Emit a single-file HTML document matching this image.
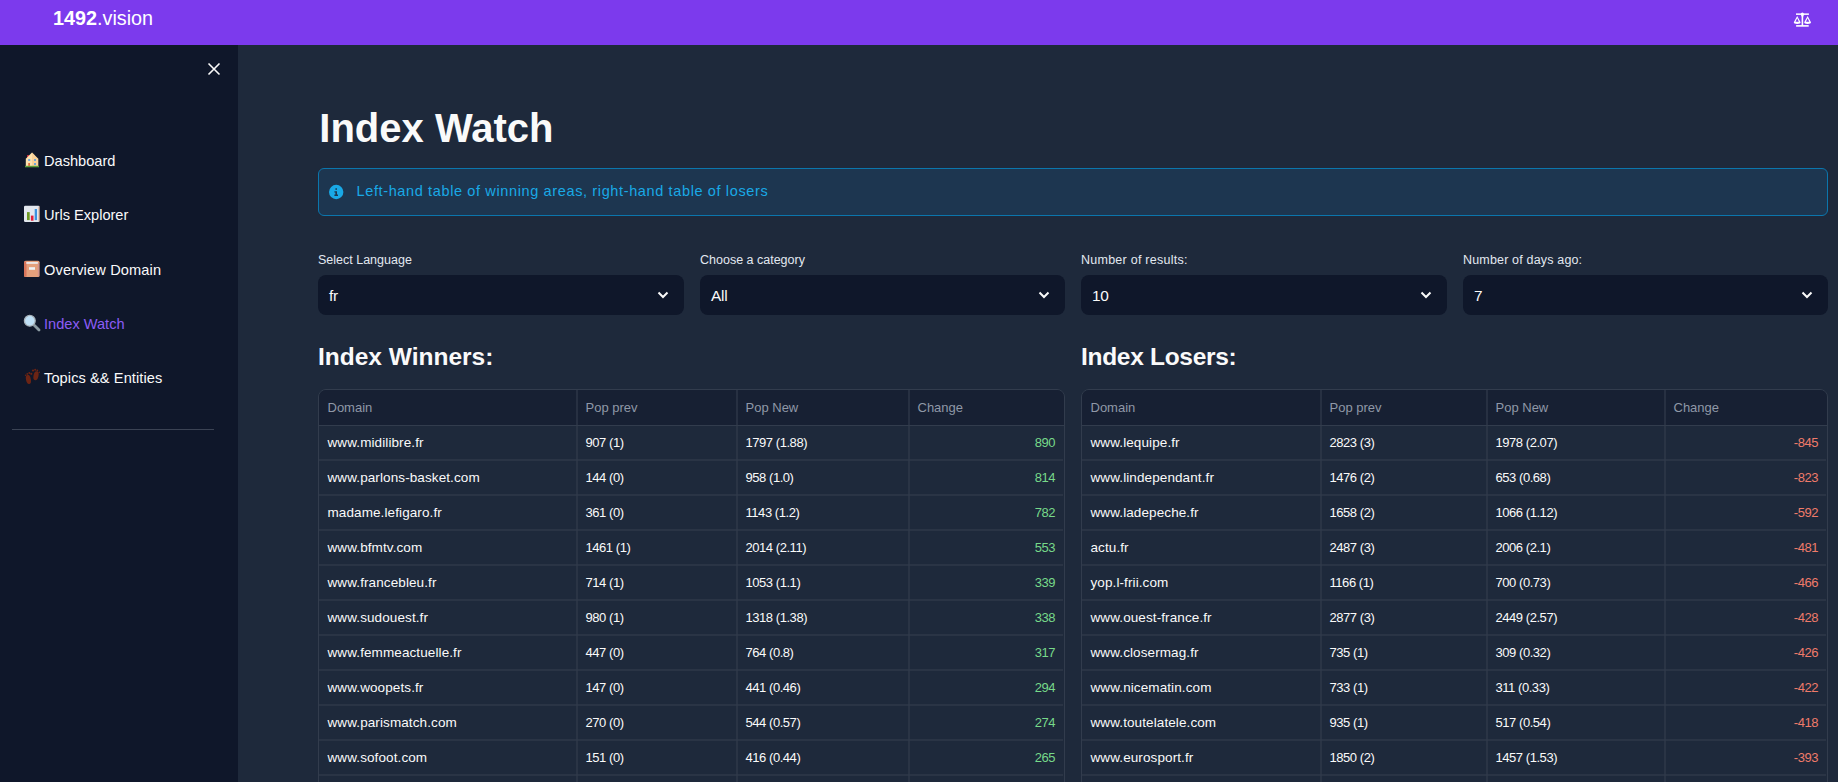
<!DOCTYPE html><html><head><meta charset="utf-8"><style>
*{margin:0;padding:0;box-sizing:border-box}
html,body{width:1838px;height:782px;overflow:hidden;background:#1e293b;font-family:"Liberation Sans",sans-serif}
.t{position:absolute;white-space:nowrap}
.a{position:absolute}
</style></head><body>
<div class="a" style="left:0;top:0;width:1838px;height:45px;background:#7c3aed"></div>
<div class="t" style="left:53px;top:8.84px;font-size:19.8px;line-height:19.8px;color:#ffffff;font-weight:400;"><b>1492</b>.vision</div>
<div class="a" style="left:0;top:45px;width:238px;height:737px;background:#0f172a"></div>
<svg class="a" style="left:206px;top:61px" width="16" height="16" viewBox="0 0 16 16"><path d="M2.5 2.5L13.5 13.5M13.5 2.5L2.5 13.5" stroke="#fafafa" stroke-width="1.6"/></svg>
<div class="t" style="left:44px;top:153.54px;font-size:14.6px;line-height:14.6px;color:#fafafa;font-weight:400;letter-spacing:0px">Dashboard</div>
<div class="t" style="left:44px;top:207.84px;font-size:14.6px;line-height:14.6px;color:#fafafa;font-weight:400;letter-spacing:0px">Urls Explorer</div>
<div class="t" style="left:44px;top:262.94px;font-size:14.6px;line-height:14.6px;color:#fafafa;font-weight:400;letter-spacing:0.14px">Overview Domain</div>
<div class="t" style="left:44px;top:316.54px;font-size:14.6px;line-height:14.6px;color:#8b5cf6;font-weight:400;letter-spacing:0px">Index Watch</div>
<div class="t" style="left:44px;top:370.84px;font-size:14.6px;line-height:14.6px;color:#fafafa;font-weight:400;letter-spacing:0.09px">Topics &amp;&amp; Entities</div>
<svg class="a" style="left:20px;top:148px" width="24" height="24" viewBox="0 0 24 24"><rect x="7" y="7" width="2" height="3" fill="#c0283a"/><path d="M5.8 10.8L12 4.6L18.2 10.8V17.9H5.8Z" fill="#fde2ae"/><path d="M12 4.6L18.2 10.8V17.9H12Z" fill="#f6c88a" opacity=".6"/><rect x="8.2" y="11.2" width="2" height="1.6" fill="#4f9be6"/><rect x="14" y="11.2" width="2" height="1.6" fill="#4f9be6"/><rect x="14" y="15.2" width="2" height="1.6" fill="#4f9be6"/><rect x="8.3" y="15" width="1.6" height="2.9" fill="#e0602e"/><rect x="5" y="17.8" width="14" height="1.5" fill="#5c9e3a"/></svg>
<svg class="a" style="left:20px;top:202px" width="24" height="24" viewBox="0 0 24 24"><rect x="4" y="3.8" width="15.6" height="16.1" rx="1.2" fill="#e3e8ef"/><rect x="18.6" y="4.5" width="1" height="15" fill="#c0703a" opacity=".6"/><rect x="7" y="10.1" width="2.7" height="8" fill="#6e9a22"/><rect x="10.9" y="13.6" width="2.6" height="5.1" fill="#e3213a"/><rect x="14.7" y="7" width="2.3" height="11.1" fill="#3c92e0"/></svg>
<svg class="a" style="left:20px;top:257px" width="24" height="24" viewBox="0 0 24 24"><rect x="4.1" y="3.8" width="15.5" height="16.1" rx="1.5" fill="#e4a07c"/><rect x="4.1" y="4.5" width="2.4" height="15.2" fill="#d9745a"/><rect x="6.3" y="5.1" width="11.6" height="1.7" fill="#eceef2"/><rect x="17.9" y="6" width="1" height="13" fill="#c98a9a" opacity=".7"/><rect x="9" y="10.2" width="6" height="2.6" fill="#eef4f8"/></svg>
<svg class="a" style="left:20px;top:311px" width="24" height="24" viewBox="0 0 24 24"><path d="M14.5 14.5L19 19" stroke="#8c9ca4" stroke-width="2.8" stroke-linecap="round"/><circle cx="9.8" cy="9.8" r="5.4" fill="#bfe0f6" stroke="#a9b3ba" stroke-width="1.3"/></svg>
<svg class="a" style="left:20px;top:365px" width="24" height="24" viewBox="0 0 24 24"><ellipse cx="8.4" cy="14.4" rx="2.4" ry="4.6" transform="rotate(-12 8.4 14.4)" fill="#6c2414"/><ellipse cx="16" cy="10.8" rx="2.5" ry="4.6" transform="rotate(12 16 10.8)" fill="#6c2414"/><circle cx="5.6" cy="10.3" r=".8" fill="#6c2414"/><circle cx="7.3" cy="8.9" r=".9" fill="#6c2414"/><circle cx="9.3" cy="8" r="1" fill="#6c2414"/><circle cx="11.3" cy="8.8" r="1.1" fill="#6c2414"/><circle cx="13" cy="5.5" r="1.1" fill="#6c2414"/><circle cx="15.2" cy="4.8" r="1" fill="#6c2414"/><circle cx="17.3" cy="5.5" r=".9" fill="#6c2414"/><circle cx="19.3" cy="7.3" r=".8" fill="#6c2414"/></svg>
<svg class="a" style="left:1790px;top:8px" width="24" height="24" viewBox="0 0 24 24"><g fill="#fff"><rect x="6" y="5.4" width="12.9" height="1.5"/><circle cx="12.4" cy="6.1" r="1.5"/><path d="M10.9 6.5H13.9L13.2 9V18H11.6V9Z"/><rect x="6.1" y="17.1" width="12.6" height="1.6"/><path fill-rule="evenodd" d="M7.2 8.1L3.8 14.3Q3.8 16 7.2 16Q10.6 16 10.6 14.3ZM7.2 10.3L5.5 13.7H8.9Z"/><path fill-rule="evenodd" d="M17.6 8.1L14.2 14.3Q14.2 16 17.6 16Q21 16 21 14.3ZM17.6 10.3L15.9 13.7H19.3Z"/></g></svg>
<div class="a" style="left:12px;top:429px;width:202px;height:1px;background:#3b4354"></div>
<div class="t" style="left:319.3px;top:107.74px;font-size:40px;line-height:40px;color:#fafafa;font-weight:700;">Index Watch</div>
<div class="a" style="left:318px;top:168px;width:1510px;height:48px;border:1px solid #0b76ad;border-radius:6px;background:#1d3650"></div>
<svg class="a" style="left:328px;top:183.8px" width="16" height="16" viewBox="0 0 16 16"><circle cx="8.2" cy="8" r="7.2" fill="#19a9e6"/><rect x="7.4" y="4.3" width="1.6" height="1.5" fill="#1d3650"/><path d="M6.4 7.2H9V10.6H10V11.9H6.4V10.6H7.4V8.5H6.4Z" fill="#1d3650"/></svg>
<div class="t" style="left:356.5px;top:183.93px;font-size:14.5px;line-height:14.5px;color:#19a9e6;font-weight:400;letter-spacing:0.63px">Left-hand table of winning areas, right-hand table of losers</div>
<div class="t" style="left:318px;top:253.62px;font-size:12.5px;line-height:12.5px;color:#e2e8f0;font-weight:400;letter-spacing:0px">Select Language</div>
<div class="a" style="left:318px;top:275px;width:366px;height:40px;border-radius:8px;background:#0f172a"></div>
<div class="t" style="left:329px;top:288.16px;font-size:15.4px;line-height:15.4px;color:#fafafa;font-weight:400;letter-spacing:-0.2px">fr</div>
<svg class="a" style="left:657px;top:289px" width="12" height="12" viewBox="0 0 12 12"><path d="M1.5 3.5L6 8L10.5 3.5" stroke="#fafafa" stroke-width="2" fill="none"/></svg>
<div class="t" style="left:700px;top:253.62px;font-size:12.5px;line-height:12.5px;color:#e2e8f0;font-weight:400;letter-spacing:0px">Choose a category</div>
<div class="a" style="left:700px;top:275px;width:365px;height:40px;border-radius:8px;background:#0f172a"></div>
<div class="t" style="left:711px;top:288.16px;font-size:15.4px;line-height:15.4px;color:#fafafa;font-weight:400;letter-spacing:-0.2px">All</div>
<svg class="a" style="left:1038px;top:289px" width="12" height="12" viewBox="0 0 12 12"><path d="M1.5 3.5L6 8L10.5 3.5" stroke="#fafafa" stroke-width="2" fill="none"/></svg>
<div class="t" style="left:1081px;top:253.62px;font-size:12.5px;line-height:12.5px;color:#e2e8f0;font-weight:400;letter-spacing:0.25px">Number of results:</div>
<div class="a" style="left:1081px;top:275px;width:366px;height:40px;border-radius:8px;background:#0f172a"></div>
<div class="t" style="left:1092px;top:288.16px;font-size:15.4px;line-height:15.4px;color:#fafafa;font-weight:400;letter-spacing:-0.2px">10</div>
<svg class="a" style="left:1420px;top:289px" width="12" height="12" viewBox="0 0 12 12"><path d="M1.5 3.5L6 8L10.5 3.5" stroke="#fafafa" stroke-width="2" fill="none"/></svg>
<div class="t" style="left:1463px;top:253.62px;font-size:12.5px;line-height:12.5px;color:#e2e8f0;font-weight:400;letter-spacing:0.17px">Number of days ago:</div>
<div class="a" style="left:1463px;top:275px;width:365px;height:40px;border-radius:8px;background:#0f172a"></div>
<div class="t" style="left:1474px;top:288.16px;font-size:15.4px;line-height:15.4px;color:#fafafa;font-weight:400;letter-spacing:-0.2px">7</div>
<svg class="a" style="left:1801px;top:289px" width="12" height="12" viewBox="0 0 12 12"><path d="M1.5 3.5L6 8L10.5 3.5" stroke="#fafafa" stroke-width="2" fill="none"/></svg>
<div class="t" style="left:318px;top:345.26px;font-size:24.5px;line-height:24.5px;color:#fafafa;font-weight:700;">Index Winners:</div>
<div class="t" style="left:1081px;top:345.26px;font-size:24.5px;line-height:24.5px;color:#fafafa;font-weight:700;letter-spacing:-0.3px">Index Losers:</div>
<div class="a" style="left:318px;top:389px;width:747px;height:420px;border:1px solid #323c4d;border-radius:8px;overflow:hidden;background:#1e293b"><div class="a" style="left:0;top:0;width:747px;height:35px;background:#172033"></div><div class="a" style="left:0;top:35px;width:747px;height:1px;background:#323c4d"></div><div class="a" style="left:0;top:69px;width:744px;height:2px;background:#323c4d;opacity:.6"></div><div class="a" style="left:0;top:104px;width:744px;height:2px;background:#323c4d;opacity:.6"></div><div class="a" style="left:0;top:139px;width:744px;height:2px;background:#323c4d;opacity:.6"></div><div class="a" style="left:0;top:174px;width:744px;height:2px;background:#323c4d;opacity:.6"></div><div class="a" style="left:0;top:209px;width:744px;height:2px;background:#323c4d;opacity:.6"></div><div class="a" style="left:0;top:244px;width:744px;height:2px;background:#323c4d;opacity:.6"></div><div class="a" style="left:0;top:279px;width:744px;height:2px;background:#323c4d;opacity:.6"></div><div class="a" style="left:0;top:314px;width:744px;height:2px;background:#323c4d;opacity:.6"></div><div class="a" style="left:0;top:349px;width:744px;height:2px;background:#323c4d;opacity:.6"></div><div class="a" style="left:0;top:384px;width:744px;height:2px;background:#323c4d;opacity:.6"></div><div class="a" style="left:257px;top:0;width:2px;height:420px;background:#323c4d;opacity:.6"></div><div class="a" style="left:417px;top:0;width:2px;height:420px;background:#323c4d;opacity:.6"></div><div class="a" style="left:589px;top:0;width:2px;height:420px;background:#323c4d;opacity:.6"></div></div>
<div class="t" style="left:327.5px;top:400.90px;font-size:13px;line-height:13px;color:#8f98a7;font-weight:400;">Domain</div>
<div class="t" style="left:585.5px;top:400.90px;font-size:13px;line-height:13px;color:#8f98a7;font-weight:400;">Pop prev</div>
<div class="t" style="left:745.5px;top:400.90px;font-size:13px;line-height:13px;color:#8f98a7;font-weight:400;">Pop New</div>
<div class="t" style="left:917.5px;top:400.90px;font-size:13px;line-height:13px;color:#8f98a7;font-weight:400;">Change</div>
<div class="t" style="left:327.5px;top:435.57px;font-size:13.5px;line-height:13.5px;color:#fafafa;font-weight:400;letter-spacing:0.1px">www.midilibre.fr</div>
<div class="t" style="left:585.5px;top:436.00px;font-size:13px;line-height:13px;color:#fafafa;font-weight:400;letter-spacing:-0.45px">907 (1)</div>
<div class="t" style="left:745.5px;top:436.00px;font-size:13px;line-height:13px;color:#fafafa;font-weight:400;letter-spacing:-0.45px">1797 (1.88)</div>
<div class="t" style="right:783px;top:436.00px;font-size:13px;line-height:13px;color:#77d98a;font-weight:400;text-align:right;letter-spacing:-0.45px">890</div>
<div class="t" style="left:327.5px;top:470.57px;font-size:13.5px;line-height:13.5px;color:#fafafa;font-weight:400;letter-spacing:0.1px">www.parlons-basket.com</div>
<div class="t" style="left:585.5px;top:471.00px;font-size:13px;line-height:13px;color:#fafafa;font-weight:400;letter-spacing:-0.45px">144 (0)</div>
<div class="t" style="left:745.5px;top:471.00px;font-size:13px;line-height:13px;color:#fafafa;font-weight:400;letter-spacing:-0.45px">958 (1.0)</div>
<div class="t" style="right:783px;top:471.00px;font-size:13px;line-height:13px;color:#77d98a;font-weight:400;text-align:right;letter-spacing:-0.45px">814</div>
<div class="t" style="left:327.5px;top:505.57px;font-size:13.5px;line-height:13.5px;color:#fafafa;font-weight:400;letter-spacing:0.1px">madame.lefigaro.fr</div>
<div class="t" style="left:585.5px;top:506.00px;font-size:13px;line-height:13px;color:#fafafa;font-weight:400;letter-spacing:-0.45px">361 (0)</div>
<div class="t" style="left:745.5px;top:506.00px;font-size:13px;line-height:13px;color:#fafafa;font-weight:400;letter-spacing:-0.45px">1143 (1.2)</div>
<div class="t" style="right:783px;top:506.00px;font-size:13px;line-height:13px;color:#77d98a;font-weight:400;text-align:right;letter-spacing:-0.45px">782</div>
<div class="t" style="left:327.5px;top:540.57px;font-size:13.5px;line-height:13.5px;color:#fafafa;font-weight:400;letter-spacing:0.1px">www.bfmtv.com</div>
<div class="t" style="left:585.5px;top:541.00px;font-size:13px;line-height:13px;color:#fafafa;font-weight:400;letter-spacing:-0.45px">1461 (1)</div>
<div class="t" style="left:745.5px;top:541.00px;font-size:13px;line-height:13px;color:#fafafa;font-weight:400;letter-spacing:-0.45px">2014 (2.11)</div>
<div class="t" style="right:783px;top:541.00px;font-size:13px;line-height:13px;color:#77d98a;font-weight:400;text-align:right;letter-spacing:-0.45px">553</div>
<div class="t" style="left:327.5px;top:575.57px;font-size:13.5px;line-height:13.5px;color:#fafafa;font-weight:400;letter-spacing:0.1px">www.francebleu.fr</div>
<div class="t" style="left:585.5px;top:576.00px;font-size:13px;line-height:13px;color:#fafafa;font-weight:400;letter-spacing:-0.45px">714 (1)</div>
<div class="t" style="left:745.5px;top:576.00px;font-size:13px;line-height:13px;color:#fafafa;font-weight:400;letter-spacing:-0.45px">1053 (1.1)</div>
<div class="t" style="right:783px;top:576.00px;font-size:13px;line-height:13px;color:#77d98a;font-weight:400;text-align:right;letter-spacing:-0.45px">339</div>
<div class="t" style="left:327.5px;top:610.57px;font-size:13.5px;line-height:13.5px;color:#fafafa;font-weight:400;letter-spacing:0.1px">www.sudouest.fr</div>
<div class="t" style="left:585.5px;top:611.00px;font-size:13px;line-height:13px;color:#fafafa;font-weight:400;letter-spacing:-0.45px">980 (1)</div>
<div class="t" style="left:745.5px;top:611.00px;font-size:13px;line-height:13px;color:#fafafa;font-weight:400;letter-spacing:-0.45px">1318 (1.38)</div>
<div class="t" style="right:783px;top:611.00px;font-size:13px;line-height:13px;color:#77d98a;font-weight:400;text-align:right;letter-spacing:-0.45px">338</div>
<div class="t" style="left:327.5px;top:645.57px;font-size:13.5px;line-height:13.5px;color:#fafafa;font-weight:400;letter-spacing:0.1px">www.femmeactuelle.fr</div>
<div class="t" style="left:585.5px;top:646.00px;font-size:13px;line-height:13px;color:#fafafa;font-weight:400;letter-spacing:-0.45px">447 (0)</div>
<div class="t" style="left:745.5px;top:646.00px;font-size:13px;line-height:13px;color:#fafafa;font-weight:400;letter-spacing:-0.45px">764 (0.8)</div>
<div class="t" style="right:783px;top:646.00px;font-size:13px;line-height:13px;color:#77d98a;font-weight:400;text-align:right;letter-spacing:-0.45px">317</div>
<div class="t" style="left:327.5px;top:680.57px;font-size:13.5px;line-height:13.5px;color:#fafafa;font-weight:400;letter-spacing:0.1px">www.woopets.fr</div>
<div class="t" style="left:585.5px;top:681.00px;font-size:13px;line-height:13px;color:#fafafa;font-weight:400;letter-spacing:-0.45px">147 (0)</div>
<div class="t" style="left:745.5px;top:681.00px;font-size:13px;line-height:13px;color:#fafafa;font-weight:400;letter-spacing:-0.45px">441 (0.46)</div>
<div class="t" style="right:783px;top:681.00px;font-size:13px;line-height:13px;color:#77d98a;font-weight:400;text-align:right;letter-spacing:-0.45px">294</div>
<div class="t" style="left:327.5px;top:715.57px;font-size:13.5px;line-height:13.5px;color:#fafafa;font-weight:400;letter-spacing:0.1px">www.parismatch.com</div>
<div class="t" style="left:585.5px;top:716.00px;font-size:13px;line-height:13px;color:#fafafa;font-weight:400;letter-spacing:-0.45px">270 (0)</div>
<div class="t" style="left:745.5px;top:716.00px;font-size:13px;line-height:13px;color:#fafafa;font-weight:400;letter-spacing:-0.45px">544 (0.57)</div>
<div class="t" style="right:783px;top:716.00px;font-size:13px;line-height:13px;color:#77d98a;font-weight:400;text-align:right;letter-spacing:-0.45px">274</div>
<div class="t" style="left:327.5px;top:750.57px;font-size:13.5px;line-height:13.5px;color:#fafafa;font-weight:400;letter-spacing:0.1px">www.sofoot.com</div>
<div class="t" style="left:585.5px;top:751.00px;font-size:13px;line-height:13px;color:#fafafa;font-weight:400;letter-spacing:-0.45px">151 (0)</div>
<div class="t" style="left:745.5px;top:751.00px;font-size:13px;line-height:13px;color:#fafafa;font-weight:400;letter-spacing:-0.45px">416 (0.44)</div>
<div class="t" style="right:783px;top:751.00px;font-size:13px;line-height:13px;color:#77d98a;font-weight:400;text-align:right;letter-spacing:-0.45px">265</div>
<div class="a" style="left:1081px;top:389px;width:747px;height:420px;border:1px solid #323c4d;border-radius:8px;overflow:hidden;background:#1e293b"><div class="a" style="left:0;top:0;width:747px;height:35px;background:#172033"></div><div class="a" style="left:0;top:35px;width:747px;height:1px;background:#323c4d"></div><div class="a" style="left:0;top:69px;width:744px;height:2px;background:#323c4d;opacity:.6"></div><div class="a" style="left:0;top:104px;width:744px;height:2px;background:#323c4d;opacity:.6"></div><div class="a" style="left:0;top:139px;width:744px;height:2px;background:#323c4d;opacity:.6"></div><div class="a" style="left:0;top:174px;width:744px;height:2px;background:#323c4d;opacity:.6"></div><div class="a" style="left:0;top:209px;width:744px;height:2px;background:#323c4d;opacity:.6"></div><div class="a" style="left:0;top:244px;width:744px;height:2px;background:#323c4d;opacity:.6"></div><div class="a" style="left:0;top:279px;width:744px;height:2px;background:#323c4d;opacity:.6"></div><div class="a" style="left:0;top:314px;width:744px;height:2px;background:#323c4d;opacity:.6"></div><div class="a" style="left:0;top:349px;width:744px;height:2px;background:#323c4d;opacity:.6"></div><div class="a" style="left:0;top:384px;width:744px;height:2px;background:#323c4d;opacity:.6"></div><div class="a" style="left:238px;top:0;width:2px;height:420px;background:#323c4d;opacity:.6"></div><div class="a" style="left:404px;top:0;width:2px;height:420px;background:#323c4d;opacity:.6"></div><div class="a" style="left:582px;top:0;width:2px;height:420px;background:#323c4d;opacity:.6"></div></div>
<div class="t" style="left:1090.5px;top:400.90px;font-size:13px;line-height:13px;color:#8f98a7;font-weight:400;">Domain</div>
<div class="t" style="left:1329.5px;top:400.90px;font-size:13px;line-height:13px;color:#8f98a7;font-weight:400;">Pop prev</div>
<div class="t" style="left:1495.5px;top:400.90px;font-size:13px;line-height:13px;color:#8f98a7;font-weight:400;">Pop New</div>
<div class="t" style="left:1673.5px;top:400.90px;font-size:13px;line-height:13px;color:#8f98a7;font-weight:400;">Change</div>
<div class="t" style="left:1090.5px;top:435.57px;font-size:13.5px;line-height:13.5px;color:#fafafa;font-weight:400;letter-spacing:0.1px">www.lequipe.fr</div>
<div class="t" style="left:1329.5px;top:436.00px;font-size:13px;line-height:13px;color:#fafafa;font-weight:400;letter-spacing:-0.45px">2823 (3)</div>
<div class="t" style="left:1495.5px;top:436.00px;font-size:13px;line-height:13px;color:#fafafa;font-weight:400;letter-spacing:-0.45px">1978 (2.07)</div>
<div class="t" style="right:20px;top:436.00px;font-size:13px;line-height:13px;color:#ef7b6a;font-weight:400;text-align:right;letter-spacing:-0.45px">-845</div>
<div class="t" style="left:1090.5px;top:470.57px;font-size:13.5px;line-height:13.5px;color:#fafafa;font-weight:400;letter-spacing:0.1px">www.lindependant.fr</div>
<div class="t" style="left:1329.5px;top:471.00px;font-size:13px;line-height:13px;color:#fafafa;font-weight:400;letter-spacing:-0.45px">1476 (2)</div>
<div class="t" style="left:1495.5px;top:471.00px;font-size:13px;line-height:13px;color:#fafafa;font-weight:400;letter-spacing:-0.45px">653 (0.68)</div>
<div class="t" style="right:20px;top:471.00px;font-size:13px;line-height:13px;color:#ef7b6a;font-weight:400;text-align:right;letter-spacing:-0.45px">-823</div>
<div class="t" style="left:1090.5px;top:505.57px;font-size:13.5px;line-height:13.5px;color:#fafafa;font-weight:400;letter-spacing:0.1px">www.ladepeche.fr</div>
<div class="t" style="left:1329.5px;top:506.00px;font-size:13px;line-height:13px;color:#fafafa;font-weight:400;letter-spacing:-0.45px">1658 (2)</div>
<div class="t" style="left:1495.5px;top:506.00px;font-size:13px;line-height:13px;color:#fafafa;font-weight:400;letter-spacing:-0.45px">1066 (1.12)</div>
<div class="t" style="right:20px;top:506.00px;font-size:13px;line-height:13px;color:#ef7b6a;font-weight:400;text-align:right;letter-spacing:-0.45px">-592</div>
<div class="t" style="left:1090.5px;top:540.57px;font-size:13.5px;line-height:13.5px;color:#fafafa;font-weight:400;letter-spacing:0.1px">actu.fr</div>
<div class="t" style="left:1329.5px;top:541.00px;font-size:13px;line-height:13px;color:#fafafa;font-weight:400;letter-spacing:-0.45px">2487 (3)</div>
<div class="t" style="left:1495.5px;top:541.00px;font-size:13px;line-height:13px;color:#fafafa;font-weight:400;letter-spacing:-0.45px">2006 (2.1)</div>
<div class="t" style="right:20px;top:541.00px;font-size:13px;line-height:13px;color:#ef7b6a;font-weight:400;text-align:right;letter-spacing:-0.45px">-481</div>
<div class="t" style="left:1090.5px;top:575.57px;font-size:13.5px;line-height:13.5px;color:#fafafa;font-weight:400;letter-spacing:0.1px">yop.l-frii.com</div>
<div class="t" style="left:1329.5px;top:576.00px;font-size:13px;line-height:13px;color:#fafafa;font-weight:400;letter-spacing:-0.45px">1166 (1)</div>
<div class="t" style="left:1495.5px;top:576.00px;font-size:13px;line-height:13px;color:#fafafa;font-weight:400;letter-spacing:-0.45px">700 (0.73)</div>
<div class="t" style="right:20px;top:576.00px;font-size:13px;line-height:13px;color:#ef7b6a;font-weight:400;text-align:right;letter-spacing:-0.45px">-466</div>
<div class="t" style="left:1090.5px;top:610.57px;font-size:13.5px;line-height:13.5px;color:#fafafa;font-weight:400;letter-spacing:0.1px">www.ouest-france.fr</div>
<div class="t" style="left:1329.5px;top:611.00px;font-size:13px;line-height:13px;color:#fafafa;font-weight:400;letter-spacing:-0.45px">2877 (3)</div>
<div class="t" style="left:1495.5px;top:611.00px;font-size:13px;line-height:13px;color:#fafafa;font-weight:400;letter-spacing:-0.45px">2449 (2.57)</div>
<div class="t" style="right:20px;top:611.00px;font-size:13px;line-height:13px;color:#ef7b6a;font-weight:400;text-align:right;letter-spacing:-0.45px">-428</div>
<div class="t" style="left:1090.5px;top:645.57px;font-size:13.5px;line-height:13.5px;color:#fafafa;font-weight:400;letter-spacing:0.1px">www.closermag.fr</div>
<div class="t" style="left:1329.5px;top:646.00px;font-size:13px;line-height:13px;color:#fafafa;font-weight:400;letter-spacing:-0.45px">735 (1)</div>
<div class="t" style="left:1495.5px;top:646.00px;font-size:13px;line-height:13px;color:#fafafa;font-weight:400;letter-spacing:-0.45px">309 (0.32)</div>
<div class="t" style="right:20px;top:646.00px;font-size:13px;line-height:13px;color:#ef7b6a;font-weight:400;text-align:right;letter-spacing:-0.45px">-426</div>
<div class="t" style="left:1090.5px;top:680.57px;font-size:13.5px;line-height:13.5px;color:#fafafa;font-weight:400;letter-spacing:0.1px">www.nicematin.com</div>
<div class="t" style="left:1329.5px;top:681.00px;font-size:13px;line-height:13px;color:#fafafa;font-weight:400;letter-spacing:-0.45px">733 (1)</div>
<div class="t" style="left:1495.5px;top:681.00px;font-size:13px;line-height:13px;color:#fafafa;font-weight:400;letter-spacing:-0.45px">311 (0.33)</div>
<div class="t" style="right:20px;top:681.00px;font-size:13px;line-height:13px;color:#ef7b6a;font-weight:400;text-align:right;letter-spacing:-0.45px">-422</div>
<div class="t" style="left:1090.5px;top:715.57px;font-size:13.5px;line-height:13.5px;color:#fafafa;font-weight:400;letter-spacing:0.1px">www.toutelatele.com</div>
<div class="t" style="left:1329.5px;top:716.00px;font-size:13px;line-height:13px;color:#fafafa;font-weight:400;letter-spacing:-0.45px">935 (1)</div>
<div class="t" style="left:1495.5px;top:716.00px;font-size:13px;line-height:13px;color:#fafafa;font-weight:400;letter-spacing:-0.45px">517 (0.54)</div>
<div class="t" style="right:20px;top:716.00px;font-size:13px;line-height:13px;color:#ef7b6a;font-weight:400;text-align:right;letter-spacing:-0.45px">-418</div>
<div class="t" style="left:1090.5px;top:750.57px;font-size:13.5px;line-height:13.5px;color:#fafafa;font-weight:400;letter-spacing:0.1px">www.eurosport.fr</div>
<div class="t" style="left:1329.5px;top:751.00px;font-size:13px;line-height:13px;color:#fafafa;font-weight:400;letter-spacing:-0.45px">1850 (2)</div>
<div class="t" style="left:1495.5px;top:751.00px;font-size:13px;line-height:13px;color:#fafafa;font-weight:400;letter-spacing:-0.45px">1457 (1.53)</div>
<div class="t" style="right:20px;top:751.00px;font-size:13px;line-height:13px;color:#ef7b6a;font-weight:400;text-align:right;letter-spacing:-0.45px">-393</div>
</body></html>
